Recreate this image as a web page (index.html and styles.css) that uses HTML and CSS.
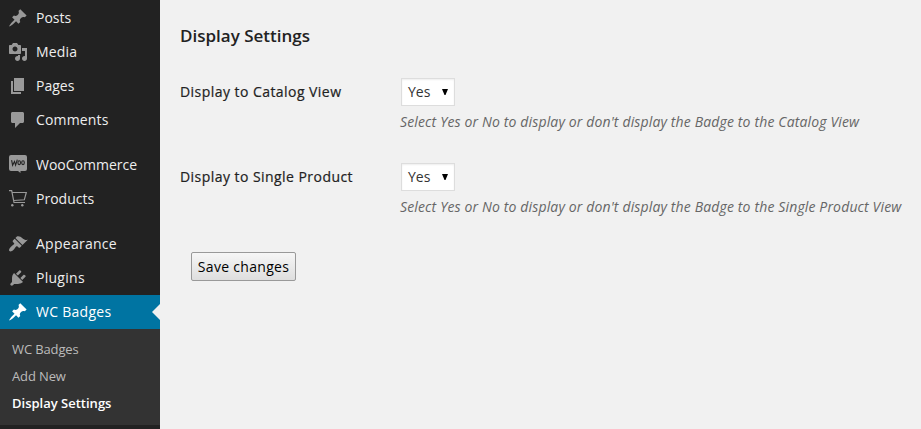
FILE: index.html
```html
<!DOCTYPE html>
<html lang="en">
<head>
<meta charset="utf-8">
<title>Display Settings</title>
<link rel="stylesheet" href="styles.css">
</head>
<body>
<nav class="sidebar">
  <a class="item"><svg class="icon" viewBox="0 0 20 20"><path d="M10.44 3.02l1.82-1.82 6.36 6.35-1.83 1.82c-1.05-.68-2.48-.57-3.41.36l-.75.75c-.92.93-1.04 2.35-.35 3.41l-1.83 1.82-2.41-2.41-2.8 2.79c-.42.42-3.38 2.71-3.8 2.29s1.86-3.39 2.28-3.81l2.79-2.79L4.1 9.36l1.83-1.82c1.05.69 2.48.57 3.4-.36l.75-.75c.93-.92 1.05-2.35.36-3.41z"/></svg><span>Posts</span></a>
  <a class="item wide"><svg class="icon" viewBox="0 0 20 20"><path d="M13 11V4c0-.55-.45-1-1-1h-1.67L9 1H5L3.67 3H2c-.55 0-1 .45-1 1v7c0 .55.45 1 1 1h10c.55 0 1-.45 1-1zM7 4.5c1.38 0 2.5 1.12 2.5 2.5S8.38 9.5 7 9.5 4.5 8.38 4.5 7 5.62 4.5 7 4.5zM14 6h5v10.5c0 1.38-1.12 2.5-2.5 2.5S14 17.88 14 16.5s1.12-2.5 2.5-2.5c.17 0 .34.02.5.05V9h-3V6zm-4 8.05V13h2v3.5c0 1.38-1.12 2.5-2.5 2.5S7 17.88 7 16.5 8.12 14 9.5 14c.17 0 .34.02.5.05z"/></svg><span>Media</span></a>
  <a class="item"><svg class="icon" viewBox="0 0 20 20"><path d="M6 15V2h10v13H6zm-1 1h8v2H3V5h2v11z"/></svg><span>Pages</span></a>
  <a class="item wide"><svg class="icon" viewBox="0 0 20 20"><path d="M4.500 2h10c.8 0 1.500.7 1.500 1.500v8c0 .8-.7 1.500-1.500 1.500H12l-5 5v-5H4.500C3.700 13 3 12.300 3 11.500v-8C3 2.700 3.700 2 4.500 2z"/></svg><span>Comments</span></a>
  <a class="item spaced"><svg class="icon" viewBox="0 0 20 20"><path d="M3 0h14a2 2 0 0 1 2 2v12a2 2 0 0 1-2 2h-4.500v2l-2.500-2H3a2 2 0 0 1-2-2V2a2 2 0 0 1 2-2z"/><g class="mark"><path d="M3.600 5.200l1 5 1.900-3.800 1.100 3.800 1.700-5.500"/><ellipse cx="11.200" cy="7.700" rx="1.300" ry="1.900"/><ellipse cx="15" cy="7.700" rx="1.300" ry="1.900"/></g></svg><span>WooCommerce</span></a>
  <a class="item"><svg class="icon" viewBox="0 0 20 20"><g class="line"><path d="M1 1.700h2.700L6 13.500h11M4.300 3.500h14l-2 7.300-10.500.7"/></g><circle cx="4.300" cy="16.200" r="1.200"/><circle cx="14.300" cy="16.200" r="1.200"/></svg><span>Products</span></a>
  <a class="item spaced wider"><svg class="icon" viewBox="0 0 20 20"><path d="M14.480 11.060L7.410 3.990l1.500-1.500c.5-.56 2.300-.47 3.510.32 1.210.8 1.430 1.280 2.910 2.100 1.180.64 2.450 1.260 4.450.85zm-.71.71L6.700 4.700 4.930 6.470c-.39.39-.39 1.020 0 1.410l1.060 1.060c.39.39.39 1.030 0 1.420-.6.6-1.430 1.110-2.210 1.690-.35.26-.7.53-1.010.84C1.430 14.230.4 16.080 1.400 17.070c.99 1 2.840-.03 4.180-1.360.31-.31.58-.66.85-1.020.57-.78 1.080-1.610 1.690-2.210.39-.39 1.020-.39 1.410 0l1.060 1.060c.39.39 1.020.39 1.410 0z"/></svg><span>Appearance</span></a>
  <a class="item wider"><svg class="icon" viewBox="0 0 20 20"><path d="M13.110 4.360L9.870 7.600 8 5.730l3.240-3.240c.35-.34 1.050-.2 1.560.32.52.51.66 1.210.31 1.550zm-8 1.770l.91-1.120 9.010 9.010-1.190.84c-.71.71-2.630 1.160-3.820 1.160H6.140L4.900 17.260c-.59.59-1.540.59-2.120 0-.59-.58-.59-1.530 0-2.120l1.240-1.240v-3.880c0-1.130.4-3.190 1.090-3.890zm7.260 3.970l3.240-3.240c.34-.35 1.040-.21 1.550.31.52.51.66 1.210.31 1.550l-3.240 3.250z"/></svg><span>Plugins</span></a>
  <a class="item wider current"><svg class="icon" viewBox="0 0 20 20"><path d="M10.44 3.02l1.82-1.82 6.36 6.35-1.83 1.82c-1.05-.68-2.48-.57-3.41.36l-.75.75c-.92.93-1.04 2.35-.35 3.41l-1.83 1.82-2.41-2.41-2.8 2.79c-.42.42-3.38 2.71-3.8 2.29s1.86-3.39 2.28-3.81l2.79-2.79L4.1 9.36l1.83-1.82c1.05.69 2.48.57 3.4-.36l.75-.75c.93-.92 1.05-2.35.36-3.41z"/></svg><span>WC Badges</span></a>
  <div class="submenu">
    <a class="tight">WC Badges</a>
    <a class="tight">Add New</a>
    <a class="active">Display Settings</a>
  </div>
</nav>
<main class="content">
  <h3>Display Settings</h3>
  <div class="row">
    <div class="label">Display to Catalog View</div>
    <div class="field">
      <div class="select"><span>Yes</span><svg class="arrow" viewBox="0 0 6 6"><path d="M0 0h6L3.500 6h-1z"/></svg></div>
      <p class="hint">Select Yes or No to display or don't display the Badge to the Catalog View</p>
    </div>
  </div>
  <div class="row">
    <div class="label">Display to Single Product</div>
    <div class="field">
      <div class="select"><span>Yes</span><svg class="arrow" viewBox="0 0 6 6"><path d="M0 0h6L3.500 6h-1z"/></svg></div>
      <p class="hint">Select Yes or No to display or don't display the Badge to the Single Product View</p>
    </div>
  </div>
  <button class="save">Save changes</button>
</main>
</body>
</html>
```
FILE: styles.css
```css
* { box-sizing: border-box; }
body {
  margin: 0;
  height: 429px;
  display: flex;
  overflow: hidden;
  background: #f1f1f1;
  color: #222;
  font: 14px/20px "Open Sans", sans-serif;
}
.sidebar {
  width: 160px;
  flex: none;
  padding-top: 1px;
  background: #222;
}
.item {
  position: relative;
  display: flex;
  align-items: center;
  gap: 8px;
  height: 34px;
  padding-left: 8px;
  color: #eee;
}
.wide { letter-spacing: .15px; }
.wider { letter-spacing: .27px; }
.spaced { margin-top: 11px; }
.icon { width: 20px; height: 20px; fill: #999; }
.mark { fill: none; stroke: #222; stroke-width: 1.1; }
.line { fill: none; stroke: #999; stroke-width: 1.2; }
.current { background: #0074a2; color: #fff; }
.current .icon { fill: #fff; }
.current::after {
  content: "";
  position: absolute;
  right: 0;
  top: 9px;
  border: 8px solid transparent;
  border-left-width: 0;
  border-right-color: #f1f1f1;
}
.submenu {
  height: 96px;
  padding: 7px 12px;
  background: #333;
  color: #bbb;
  font-size: 13px;
}
.submenu a { display: block; height: 27px; line-height: 27px; white-space: nowrap; }
.submenu .tight { letter-spacing: -.12px; }
.submenu .active { color: #fff; font-weight: 600; }
.content { flex: 1; padding: 24px 0 0 20px; white-space: nowrap; }
h3 { margin: 0 0 30px; font-size: 17px; line-height: 24px; font-weight: 600; }
.row { display: flex; height: 85px; }
.label { width: 220px; padding-top: 4px; letter-spacing: .45px; -webkit-text-stroke: .2px #222; }
.select {
  display: flex;
  align-items: center;
  justify-content: space-between;
  width: 54px;
  height: 28px;
  margin-left: 1px;
  padding: 0 6px;
  border: 1px solid #ddd;
  background: #fff;
  box-shadow: inset 0 1px 2px rgba(0,0,0,.07);
  color: #333;
}
.arrow { width: 6px; height: 6px; fill: #000; }
.hint { margin: 6px 0 0; color: #666; font-style: italic; letter-spacing: .145px; }
.save {
  display: block;
  width: 105px;
  height: 29px;
  margin: 4px 0 0 11px;
  padding: 0;
  border: 1px solid #999;
  border-radius: 2px;
  background: linear-gradient(#f6f6f6, #dedede);
  color: #000;
  font: inherit;
  letter-spacing: .3px;
}
```
